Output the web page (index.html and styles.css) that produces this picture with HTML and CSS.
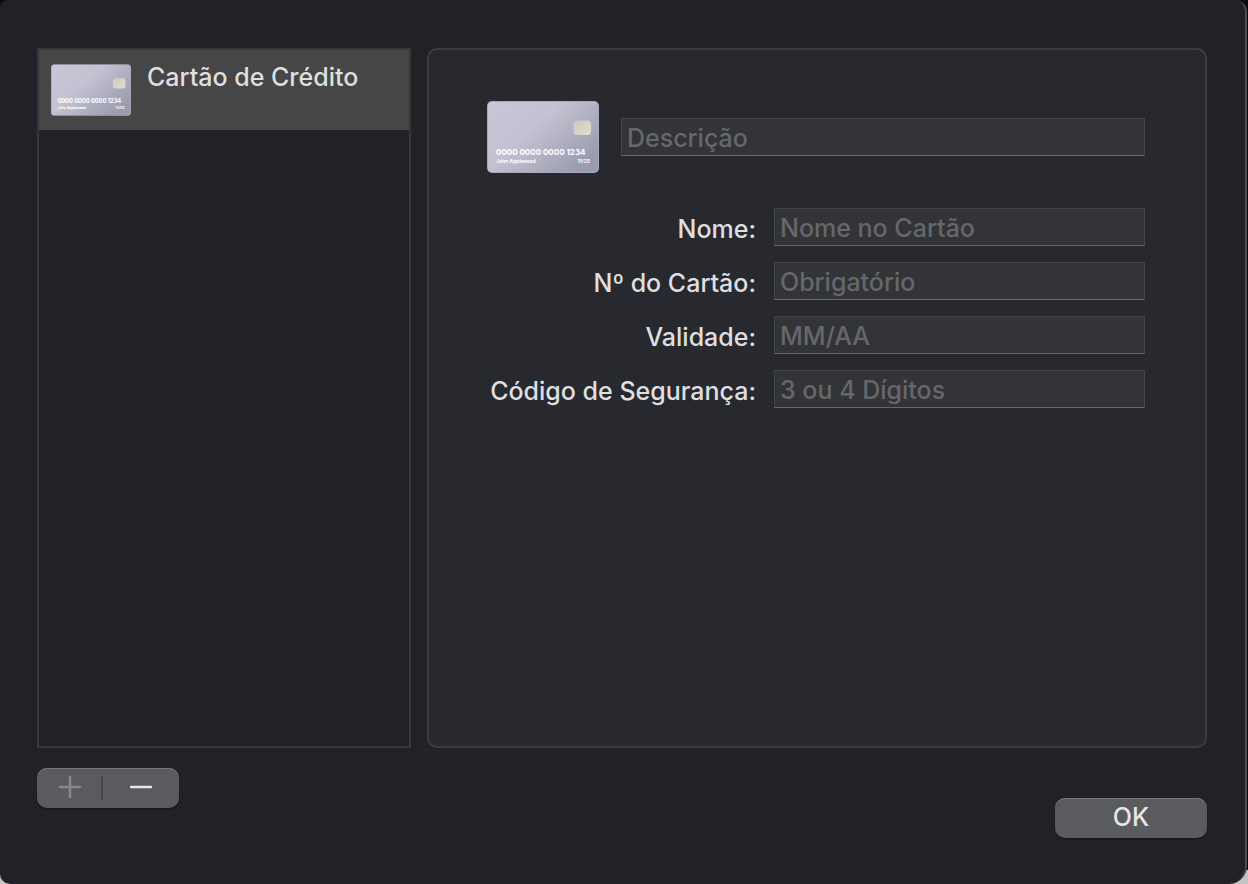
FILE: index.html
```html
<!DOCTYPE html>
<html lang="pt-BR">
<head>
    <meta charset="UTF-8">
    <meta name="viewport" content="width=device-width, initial-scale=1.0">
    <title>Cartões de Crédito</title>
    <link rel="stylesheet" href="styles.css">
</head>
<body>
    <div class="dialog">
        <main class="layout">
            <ul class="card-list">
                <li>
                    <a class="card-item active" href="#cartao">
                        <svg class="thumb" viewBox="0 0 112 72" aria-hidden="true">
                            <defs>
                                <linearGradient id="cardFill" x1="0" y1="0" x2="1" y2="0.7">
                                    <stop offset="0" stop-color="#c8c7d8"/>
                                    <stop offset="0.45" stop-color="#c3c2d3"/>
                                    <stop offset="1" stop-color="#9b9caf"/>
                                </linearGradient>
                                <linearGradient id="chipFill" x1="0" y1="0" x2="1" y2="1">
                                    <stop offset="0" stop-color="#cbc9ba"/>
                                    <stop offset="1" stop-color="#e2dfd1"/>
                                </linearGradient>
                            </defs>
                            <g id="card">
                                <rect width="112" height="72" rx="5" fill="#a9a9bb"/>
                                <rect x="1" y="1" width="110" height="70" rx="4" fill="url(#cardFill)"/>
                                <rect x="86.5" y="19.5" width="17.5" height="14.5" rx="3.5" fill="url(#chipFill)"/>
                                <g class="card-text">
                                    <text x="9" y="54" font-size="8">0000 0000 0000 1234</text>
                                    <text x="9" y="62" font-size="5">John Appleseed</text>
                                    <text x="103" y="62" font-size="5" text-anchor="end">11/25</text>
                                </g>
                            </g>
                        </svg>
                        <span>Cartão de Crédito</span>
                    </a>
                </li>
            </ul>
            <form class="details" id="cartao">
                <div class="description">
                    <svg class="picture" viewBox="0 0 112 72" aria-hidden="true"><use href="#card"/></svg>
                    <input type="text" placeholder="Descrição" aria-label="Descrição">
                </div>
                <div class="fields">
                    <label for="nome">Nome:</label>
                    <input type="text" id="nome" placeholder="Nome no Cartão">
                    <label for="numero">Nº do Cartão:</label>
                    <input type="text" id="numero" placeholder="Obrigatório">
                    <label for="validade">Validade:</label>
                    <input type="text" id="validade" placeholder="MM/AA">
                    <label for="codigo">Código de Segurança:</label>
                    <input type="text" id="codigo" placeholder="3 ou 4 Dígitos">
                </div>
            </form>
        </main>
        <footer class="actions">
            <div class="segmented">
                <button type="button" aria-label="Adicionar" disabled>
                    <svg width="22" height="22" viewBox="0 0 22 22"><path d="M11 1v20M1 11h20" stroke="#88898c" stroke-width="2.5" stroke-linecap="round"/></svg>
                </button>
                <button type="button" aria-label="Remover">
                    <svg width="22" height="22" viewBox="0 0 22 22"><path d="M1 11h20" stroke="#e6e6e9" stroke-width="2.5" stroke-linecap="round"/></svg>
                </button>
            </div>
            <button type="button" class="ok-btn">OK</button>
        </footer>
    </div>
</body>
</html>
```

FILE: styles.css
```css
* {
    margin: 0;
    padding: 0;
    box-sizing: border-box;
}
body {
    font-family: Inter, sans-serif;
    font-size: 25px;
    font-weight: 500;
    line-height: 32px;
    color: #dfdfe1;
    background: linear-gradient(#0c0c0e calc(100% - 14px), #c4c4c4 calc(100% - 14px));
}
.dialog {
    min-height: 100vh;
    display: flex;
    flex-direction: column;
    gap: 20px;
    margin-right: 1px;
    padding: 48px 38px 46px 37px;
    background-color: #212227;
    border-right: 2px solid #4b4b4f;
    border-radius: 8px 12px 18px 10px;
}
.layout {
    flex: 1;
    display: flex;
    gap: 16px;
}
.card-list {
    flex: 0 0 374px;
    list-style: none;
    border: 2px solid #37373a;
}
.card-item {
    display: flex;
    align-items: flex-start;
    gap: 16px;
    height: 80px;
    padding: 12px;
    line-height: 30px;
    color: #dfdfdf;
    text-decoration: none;
}
.card-item.active {
    background-color: #464646;
}
.card-text {
    fill: #fff;
    font-weight: 700;
}
.thumb {
    width: 80px;
    height: 52px;
    margin-top: 2px;
}
.details {
    flex: 1;
    padding: 51px 60px 51px 58px;
    background-color: #28292e;
    border: 2px solid #3c3d41;
    border-radius: 10px;
}
.description {
    display: flex;
    align-items: center;
    gap: 22px;
    margin-bottom: 35px;
}
.picture {
    width: 112px;
    height: 72px;
    flex-shrink: 0;
}
.fields {
    display: grid;
    grid-template-columns: 269px 1fr;
    gap: 16px 18px;
}
label {
    padding-top: 5px;
    text-align: right;
    white-space: nowrap;
}
input {
    width: 100%;
    min-width: 0;
    height: 38px;
    padding: 2px 5px 0;
    font: inherit;
    color: #dfdfe1;
    background-color: #333438;
    border: 1px solid #434448;
    border-bottom-color: #67686b;
    outline: none;
}
input::placeholder {
    color: #66676b;
    opacity: 1;
}
.actions {
    display: flex;
    justify-content: space-between;
    align-items: flex-start;
}
button {
    height: 40px;
    font: inherit;
    color: #e6e6e9;
    background-color: #5a5b5e;
    border: none;
}
.segmented, .ok-btn {
    border-radius: 10px;
    box-shadow: inset 0 1px 0 #77787b, 0 1px 2px rgba(0, 0, 0, 0.4);
}
.segmented {
    display: flex;
    width: 142px;
    background-color: #5a5b5e;
}
.segmented button {
    flex: 1;
    display: flex;
    align-items: center;
    justify-content: center;
    padding-bottom: 3px;
    background: none;
}
.segmented button:first-child {
    flex: 0 0 66px;
    background: linear-gradient(#47484b, #47484b) right center / 2px 24px no-repeat;
}
.ok-btn {
    width: 152px;
    margin-top: 30px;
    padding-bottom: 2px;
}
@media (max-width: 900px) {
    .layout {
        flex-direction: column;
    }
    .card-list {
        flex-basis: auto;
    }
}
```
